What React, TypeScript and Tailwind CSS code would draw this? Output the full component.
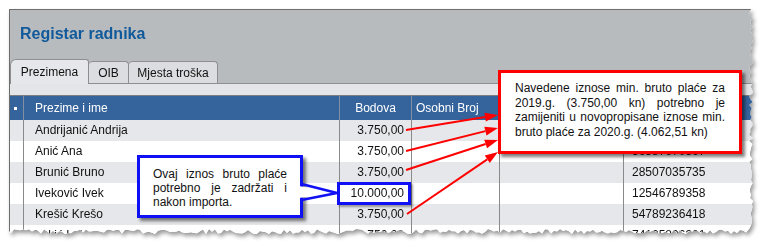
import React from "react";

type Row = { name: string; bodova: string; broj: string; oib: string };

const rows: Row[] = [
  { name: "Andrijanić Andrija", bodova: "3.750,00", broj: "", oib: "68474522157" },
  { name: "Anić Ana", bodova: "3.750,00", broj: "", oib: "36587670567" },
  { name: "Brunić Bruno", bodova: "3.750,00", broj: "", oib: "28507035735" },
  { name: "Iveković Ivek", bodova: "10.000,00", broj: "", oib: "12546789358" },
  { name: "Krešić Krešo", bodova: "3.750,00", broj: "", oib: "54789236418" },
  { name: "Lukić Luka", bodova: "3.750,00", broj: "", oib: "74125896301" },
];

// red arrows: from the amount to the note box
const arrows = [
  [406, 130, 498, 115],
  [406, 151, 498, 128],
  [406, 170, 498, 140],
  [407, 214, 498, 152],
];

const cols = "grid grid-cols-[14px_316px_72px_88px_124px_1fr]";

// torn paper edge on the right and at the bottom
function tornClip(w: number, h: number) {
  const rnd = (i: number) => {
    const x = Math.sin(i * 12.9898 + 3.1) * 43758.5453;
    return x - Math.floor(x);
  };
  const pts: string[] = ["0px 0px", `${w - 2}px 0px`];
  for (let y = 3; y <= h - 6; y += 3) pts.push(`${(w - 4 + rnd(y) * 4).toFixed(1)}px ${y}px`);
  for (let x = w - 4; x >= 0; x -= 3) pts.push(`${x}px ${(h - 5 + rnd(x + 700) * 5).toFixed(1)}px`);
  pts.push(`0px ${h - 3}px`);
  return `polygon(${pts.join(",")})`;
}

function Arrow({ a }: { a: number[] }) {
  const [x1, y1, x2, y2] = a;
  const dx = x2 - x1;
  const dy = y2 - y1;
  const len = Math.hypot(dx, dy);
  const ux = dx / len;
  const uy = dy / len;
  const bx = x2 - ux * 13;
  const by = y2 - uy * 13;
  const px = -uy * 4.5;
  const py = ux * 4.5;
  return (
    <g>
      <line x1={x1} y1={y1} x2={bx} y2={by} stroke="#ff0000" strokeWidth={2} />
      <polygon points={`${x2},${y2} ${bx + px},${by + py} ${bx - px},${by - py}`} fill="#ff0000" />
    </g>
  );
}

export default function App() {
  return (
    <div className="relative w-[768px] h-[250px] overflow-hidden bg-white pl-[9px] pt-[9px] font-['Liberation_Sans',Arial,sans-serif] text-[12px] text-[#111]">
      {/* panel */}
      <div className="[filter:drop-shadow(2px_3px_2px_rgba(0,0,0,0.4))]">
        <div className="w-[744px] h-[225px] overflow-hidden bg-white border-t border-l border-[#6e6e6e]" style={{ clipPath: tornClip(744, 225) }}>
          <div className="bg-[#b8bbbe]">
            <div className="pl-[10px] pt-[14px] h-[34px] text-[16px] leading-[20px] font-bold text-[#10599b]">Registar radnika</div>
            <div className="flex items-end h-[25px] mt-[15px] border-b border-[#8e8e8e]">
              <div className="flex items-center justify-center w-[79px] h-[25px] -mb-px bg-[#e6e7ea] border-t border-l border-r border-[#8e8e8e] rounded-tl-[6px] rounded-tr-[3px]">
                Prezimena
              </div>
              <div className="flex items-center justify-center w-[40px] h-[22px] bg-[#dcdde0] border-t border-r border-[#8e8e8e] rounded-t-[4px]">
                OIB
              </div>
              <div className="flex items-center justify-center w-[89px] h-[22px] bg-[#dcdde0] border-t border-r border-[#8e8e8e] rounded-t-[4px]">
                Mjesta troška
              </div>
            </div>
          </div>
          <div className="h-[12px] bg-[#e4e5e8] border-b border-[#7d7d7d]" />

          {/* table header */}
          <div className={`${cols} h-[24px] bg-[#35639b] text-white leading-[24px]`}>
            <div className="flex items-center pl-[4px] border-r border-[#8390a2]">
              <div className="w-[3px] h-[3px] bg-white" />
            </div>
            <div className="pl-[11px] border-r border-[#8390a2]">Prezime i ime</div>
            <div className="text-center border-r border-[#8390a2]">Bodova</div>
            <div className="pl-[4px] border-r border-[#8390a2]">Osobni Broj</div>
            <div className="pl-[4px] border-r border-[#8390a2]">Porezni broj</div>
            <div className="pl-[4px]">OIB</div>
          </div>

          {/* rows */}
          {rows.map((r, i) => (
            <div key={r.name} className={`${cols} h-[21px] leading-[21px] ${i % 2 === 0 ? "bg-[#e6e7ea]" : "bg-white"}`}>
              <div className="border-r border-[#8a8a8a]" />
              <div className="pl-[11px] border-r border-[#8a8a8a]">{r.name}</div>
              <div className="text-right pr-[7px] border-r border-[#8a8a8a]">{r.bodova}</div>
              <div className="border-r border-[#8a8a8a]">{r.broj}</div>
              <div className="border-r border-[#8a8a8a]" />
              <div className="pl-[8px]">{r.oib}</div>
            </div>
          ))}
        </div>
      </div>

      {/* red arrows */}
      <svg className="absolute left-0 top-0 w-[768px] h-[250px] pointer-events-none" viewBox="0 0 768 250">
        {arrows.map((a, i) => (
          <Arrow key={i} a={a} />
        ))}
      </svg>

      {/* highlight around 10.000,00 */}
      <div className="absolute left-[337px] top-[182px] w-[74px] h-[23px] border-[3px] border-[#1010f5] shadow-[2px_2px_2px_rgba(0,0,0,0.35)]" />

      {/* blue note */}
      <div className="absolute left-[137px] top-[155px] w-[166px] h-[63px] bg-white border-[3px] border-[#1010f5] px-[13px] pt-[9px] leading-[14px] shadow-[3px_3px_3px_rgba(0,0,0,0.5)]">
        <div className="text-justify [text-align-last:justify]">Ovaj iznos bruto plaće</div>
        <div className="text-justify [text-align-last:justify]">potrebno je zadržati i</div>
        <div>nakon importa.</div>
      </div>
      <svg className="absolute left-0 top-0 w-[768px] h-[250px] pointer-events-none" viewBox="0 0 768 250">
        <polygon points="299,186 335,193 299,198" fill="#ffffff" />
        <polyline points="301.5,184 337,193 301.5,200" fill="none" stroke="#1010f5" strokeWidth={2.5} />
      </svg>

      {/* red note */}
      <div className="absolute left-[498px] top-[70px] w-[244px] h-[84px] bg-white border-[3px] border-[#ff0000] px-[14px] pt-[8px] leading-[14.5px] shadow-[3px_3px_3px_rgba(0,0,0,0.5)]">
        <div className="text-justify [text-align-last:justify]">Navedene iznose min. bruto plaće za</div>
        <div className="text-justify [text-align-last:justify]">2019.g. (3.750,00 kn) potrebno je</div>
        <div className="text-justify [text-align-last:justify]">zamijeniti u novopropisane iznose min.</div>
        <div>bruto plaće za 2020.g. (4.062,51 kn)</div>
      </div>
    </div>
  );
}
